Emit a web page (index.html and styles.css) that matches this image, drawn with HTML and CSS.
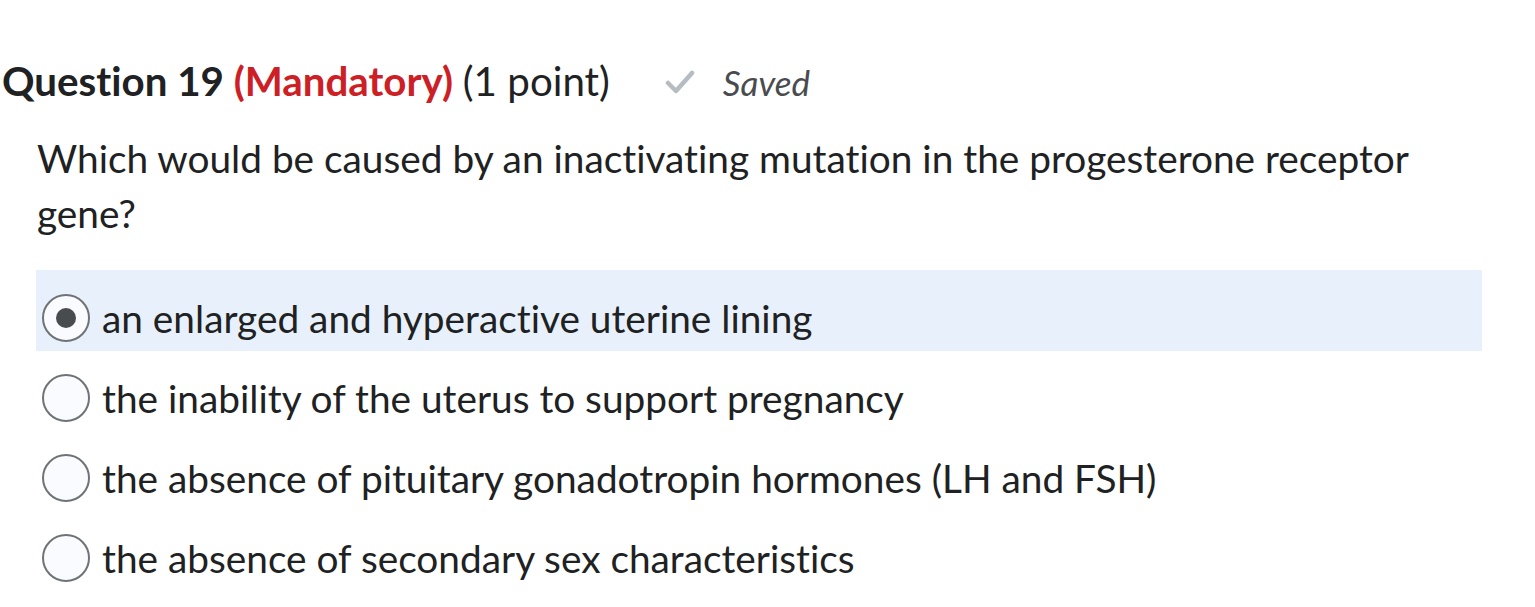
FILE: index.html
```html
<!DOCTYPE html>
<html>
<head>
<meta charset="utf-8">
<link rel="stylesheet" href="styles.css">
</head>
<body>
<div class="page">
  <div class="qhead">
    <h2 class="qtitle">Question 19 <span class="mand">(Mandatory)</span> <span class="pts">(1 point)</span></h2>
    <div class="saved">
      <svg class="check" viewBox="0 0 30 26" width="30" height="26"><path d="M3 14 L11 22 L27 4" fill="none" stroke="#b6bdc2" stroke-width="4.5" stroke-linecap="round" stroke-linejoin="round"/></svg>
      <span class="saved-text">Saved</span>
    </div>
  </div>
  <div class="qbody">
    <p class="qtext">Which would be caused by an inactivating mutation in the progesterone receptor gene?</p>
    <div class="options">
      <label class="opt selected"><span class="radio checked"></span><span class="otext">an enlarged and hyperactive uterine lining</span></label>
      <label class="opt"><span class="radio"></span><span class="otext">the inability of the uterus to support pregnancy</span></label>
      <label class="opt"><span class="radio"></span><span class="otext">the absence of pituitary gonadotropin hormones (LH and FSH)</span></label>
      <label class="opt"><span class="radio"></span><span class="otext">the absence of secondary sex characteristics</span></label>
    </div>
  </div>
</div>
</body>
</html>
```
FILE: styles.css
```css
html, body {
  margin: 0;
  padding: 0;
  background: #ffffff;
}
body {
  font-family: Lato, "Liberation Sans", sans-serif;
  color: #202122;
  font-variant-ligatures: no-common-ligatures;
}
.page {
  padding: 53px 0 0 2px;
}
.qhead {
  display: flex;
  align-items: center;
  height: 56px;
}
.qtitle {
  margin: 0;
  font-size: 40.3px;
  font-weight: 700;
  line-height: 56px;
  color: #202122;
}
.mand {
  color: #cd2026;
}
.pts {
  font-weight: 400;
}
.saved {
  display: flex;
  align-items: center;
  margin-left: 55px;
  color: #494c4e;
  padding-top: 2px;
}
.check {
  display: block;
  margin-right: 28px;
}
.saved-text {
  font-style: italic;
  font-size: 35px;
}
.qbody {
  padding-left: 34px;
  width: 1446px;
}
.qtext {
  margin: 22px 0 0 1px;
  font-size: 38.8px;
  line-height: 55px;
  width: 1420px;
}
.options {
  margin-top: 29px;
}
.opt {
  box-sizing: border-box;
  display: flex;
  align-items: center;
  height: 80px;
  padding: 14px 0 0 6px;
}
.opt.selected {
  background: #e8f1fb;
  height: 81px;
}
.radio {
  box-sizing: border-box;
  width: 48px;
  height: 48px;
  border-radius: 50%;
  border: 2px solid #6e7376;
  background: #f9fbff;
  display: flex;
  align-items: center;
  justify-content: center;
  flex: none;
}
.radio.checked::after {
  content: "";
  width: 20px;
  height: 20px;
  border-radius: 50%;
  background: #494c4e;
}
.otext {
  margin-left: 12px;
  font-size: 38.8px;
}
```
